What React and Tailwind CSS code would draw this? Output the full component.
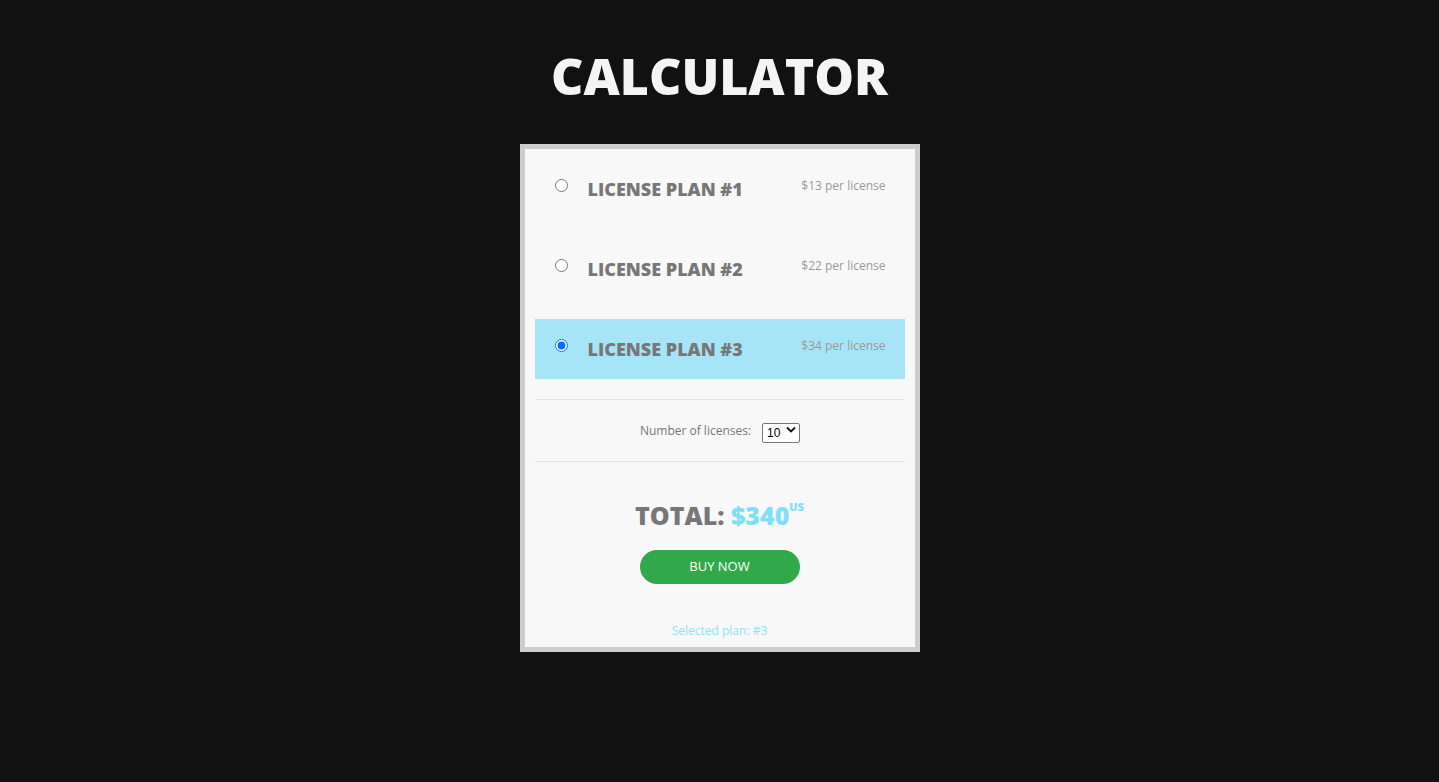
import React, { useState } from "react";

const plans = [
  { id: 1, price: 13 },
  { id: 2, price: 22 },
  { id: 3, price: 34 },
];

export default function App() {
  const [selected, setSelected] = useState(3);
  const [count, setCount] = useState(10);
  const plan = plans.find((p) => p.id === selected);
  const total = plan.price * count;

  return (
    <div
      className="min-h-screen w-full bg-[#111111] flex flex-col items-center pt-[51px]"
      style={{ fontFamily: '"Open Sans", "Liberation Sans", sans-serif' }}
    >
      <h1 className="text-[50px] leading-none font-extrabold text-[#f4f4f4]">
        CALCULATOR
      </h1>

      <div className="mt-[43px] w-[400px] border-[5px] border-[#cdcdcd] bg-[#f8f8f8] p-[10px]">
        {plans.map((p) => (
          <label
            key={p.id}
            className={`flex items-start h-[60px] mb-[20px] pl-[20px] pr-[19px] pt-[20px] cursor-pointer ${
              selected === p.id ? "bg-[#a6e5f7]" : ""
            }`}
          >
            <input
              type="radio"
              name="plan"
              checked={selected === p.id}
              onChange={() => setSelected(p.id)}
              className="m-0 w-[13px] h-[13px] accent-[#0a6cff]"
            />
            <span className="ml-[20px] flex-1 text-[18px] leading-none font-extrabold text-[#777777] mt-[1px]">
              LICENSE PLAN #{p.id}
            </span>
            <span className="text-[12px] leading-none text-[#999999] mt-[1px]">
              ${p.price} per license
            </span>
          </label>
        ))}

        <div className="border-t border-[#e3e3e3]" />
        <div className="flex items-center justify-center py-[20px] h-[61px]">
          <span className="text-[12px] text-[#777777] mr-[11px] ml-[1px]">Number of licenses:</span>
          <div className="relative">
            <select
              value={count}
              onChange={(e) => setCount(Number(e.target.value))}
              className="appearance-none h-[20px] w-[38px] border border-[#767676] rounded-[2px] bg-white text-[12px] leading-none text-black pl-[4px] pr-[14px]"
              style={{ fontFamily: '"Liberation Sans", Arial, sans-serif' }}
            >
              {[1, 2, 3, 4, 5, 6, 7, 8, 9, 10].map((n) => (
                <option key={n} value={n}>
                  {n}
                </option>
              ))}
            </select>
            <svg
              className="pointer-events-none absolute right-[4px] top-[7px]"
              width="10"
              height="7"
              viewBox="0 0 10 7"
            >
              <path d="M1 1.5 L5 5.5 L9 1.5" fill="none" stroke="#111" strokeWidth="1.8" />
            </svg>
          </div>
        </div>
        <div className="border-t border-[#e3e3e3]" />

        <div className="flex flex-col items-center pt-[41px]">
          <div className="text-[25px] leading-none font-extrabold text-[#777777] flex items-start">
            <span>TOTAL:&nbsp;</span>
            <span className="text-[#80dff8]">${total}</span>
            <span className="text-[11px] leading-none text-[#80dff8] -mt-[2px]">US</span>
          </div>
          <button className="mt-[22px] w-[160px] h-[34px] rounded-full bg-[#31a84a] text-white text-[13px]">
            BUY NOW
          </button>
          <div className="mt-[41px] text-[12px] leading-none text-[#8fe2f7]">
            Selected plan: #{selected}
          </div>
        </div>
      </div>
    </div>
  );
}
